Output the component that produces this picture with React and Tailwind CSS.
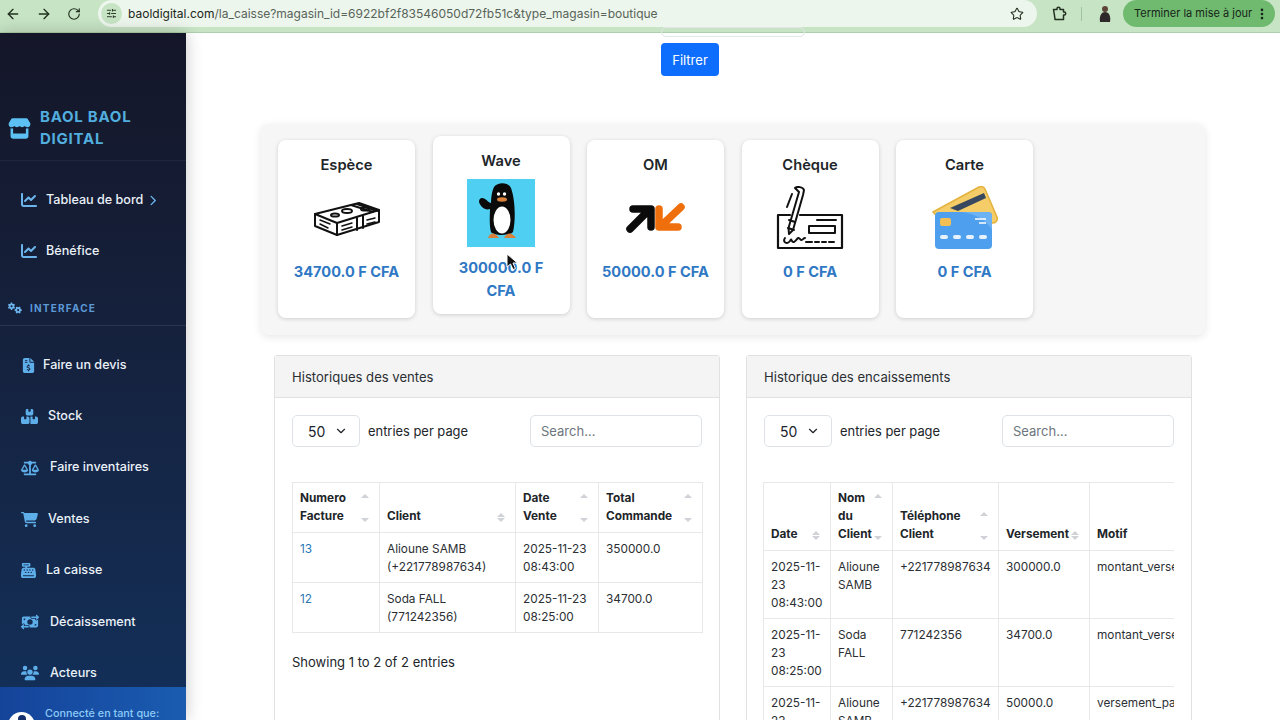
import React from "react";
import { ArrowLeft, ArrowRight, RotateCw, SlidersHorizontal, Star, MoreVertical, ChevronDown } from "lucide-react";
import { FaChartLine, FaChevronRight, FaGears, FaFileInvoiceDollar, FaBoxesStacked, FaScaleBalanced, FaCartShopping, FaCashRegister, FaMoneyBillTransfer, FaUsers, FaStore } from "react-icons/fa6";

const nav = [
  ["Faire un devis", FaFileInvoiceDollar, "w-[22px]", 15],
  ["Stock", FaBoxesStacked, "w-[27px]", 17],
  ["Faire inventaires", FaScaleBalanced, "w-[29px]", 18],
  ["Ventes", FaCartShopping, "w-[27px]", 17],
  ["La caisse", FaCashRegister, "w-[25px]", 15],
  ["Décaissement", FaMoneyBillTransfer, "w-[29px]", 18],
  ["Acteurs", FaUsers, "w-[29px]", 18],
];

function SortIcon({ mode = "sep" }) {
  const top = mode === "sep" ? "bottom-[15px]" : mode === "mid" ? "top-[29px]" : "top-[11px]";
  return <span className="absolute right-[10px] top-0 bottom-0 w-[8px]" aria-hidden>
    <span className={`absolute left-0 w-0 h-0 border-x-[4px] border-x-transparent border-b-[4px] border-b-[#cfd2d6] ${top}`} />
    <span className="absolute left-0 w-0 h-0 border-x-[4px] border-x-transparent border-t-[4px] border-t-[#cfd2d6] bottom-[10px]" />
  </span>;
}

function Th({ w, children, mode, className = "" }) {
  return <th className={`relative border border-[#e6e8ea] align-bottom text-left font-bold px-[7px] pb-[7px] pt-[6px] leading-[18px] ${className}`} style={{ width: w }}>
    {children}<SortIcon mode={mode} />
  </th>;
}
function Td({ children, className = "" }) {
  return <td className={`border border-[#e6e8ea] align-top px-[7px] pt-[7px] pb-[6px] leading-[18px] ${className}`}>{children}</td>;
}

function Banknotes() {
  return <svg width="68" height="36" viewBox="0 0 68 36" fill="none" stroke="#111" strokeWidth="2" strokeLinejoin="round" strokeLinecap="round">
    <path d="M2 14 L46 3 L66 10 L24 23 Z" fill="#fff" />
    <path d="M2 14 V26 L24 35 V23" />
    <path d="M24 35 L66 22 V10" />
    <path d="M38 5 L60 12 M44 4 L64 11 M50 16 V28 M44 18 V30" />
    <ellipse cx="34" cy="11" rx="5" ry="2" />
    <ellipse cx="22" cy="15" rx="4" ry="1.6" />
    <ellipse cx="52" cy="9" rx="4" ry="1.6" />
    <path d="M7 20 L17 24 M7 24 L15 28 M29 26 L39 23 M29 30 L39 27 M54 20 L62 18 M54 24 L62 22" strokeWidth="1.5" />
  </svg>;
}
function Penguin() {
  return <svg width="68" height="68" viewBox="0 0 68 68">
    <rect width="68" height="68" fill="#4fd0f2" />
    <path d="M27 8 C31 3 41 3 44 9 C48 20 49 40 46 53 C43 57 27 57 24 53 C22 46 23 34 23 30 C18 32 13 27 12 23 C12 19 15 18 18 20 C20 21 22 24 24 24 C24 18 25 12 27 8 Z" fill="#0a0a0a" />
    <ellipse cx="35" cy="41" rx="8.5" ry="13.5" fill="#fff" />
    <circle cx="31.5" cy="15" r="1.7" fill="#fff" /><circle cx="37.5" cy="15" r="1.7" fill="#fff" />
    <ellipse cx="35" cy="20.5" rx="5" ry="2.2" fill="#d9803a" />
    <path d="M21 59 C23 53 28 53 32 59 Z M37 59 C40 53 45 53 49 59 Z" fill="#d9803a" />
  </svg>;
}
function OMLogo() {
  return <svg width="60" height="30" viewBox="0 0 60 30" fill="none" strokeLinecap="round" strokeLinejoin="round">
    <path d="M4 26 L23 7 M7 6 H25 V24" stroke="#0b0b0b" strokeWidth="7.5" />
    <path d="M55 4 L36 22 M33 6 V24 H52" stroke="#ee6f0c" strokeWidth="7.5" />
  </svg>;
}
function Cheque() {
  return <svg width="68" height="64" viewBox="0 0 68 64" fill="none" stroke="#111" strokeWidth="2" strokeLinecap="round" strokeLinejoin="round">
    <path d="M14 29 H2 V62 H66 V29 H24" strokeWidth="2.2" />
    <path d="M19 2 C21 0 27 1 28 4 L27 9 L17 44 L13 48 L12.5 42 L23 6 Z" fill="#fff" />
    <path d="M16 8 L11 21 M12 42 L18 44 M19 36 L13 34" />
    <rect x="33" y="40" width="26" height="7" />
    <path d="M41 34 H60 M30 56 H36 M39 56 H43 M46 56 H50 M53 56 H58" />
    <path d="M9 52 C6 56 11 59 14 55 C16 51 15 57 18 56 C21 54 22 50 24 53 C26 56 27 52 29 52" strokeWidth="2"/>
  </svg>;
}
function Cards() {
  return <svg width="66" height="64" viewBox="0 0 66 64">
    <path d="M1 26 L47 1 C50 0 52 1 53 3 L65 31 C66 34 64 37 61 37 L12 38 Z" fill="#f4cd68" stroke="#e5b13d" strokeWidth="1.5" />
    <path d="M18 22 L52 7 L54 12 L26 25 Z" fill="#38495f" />
    <rect x="3" y="26" width="57" height="37" rx="4" fill="#4e9fee" />
    <path d="M30 26 H56 C59 26 60 28 60 30 V44 C54 34 44 28 30 26 Z" fill="#6db2f3" />
    <rect x="8" y="32" width="11" height="8" rx="2" fill="#f2bf55" />
    <path d="M43 33 H54 M47 37 H54" stroke="#fff" strokeWidth="1.3" />
    <rect x="8" y="49" width="8" height="4" rx="2" fill="#e6f2fd" /><rect x="21" y="49" width="8" height="4" rx="2" fill="#e6f2fd" /><rect x="34" y="49" width="8" height="4" rx="2" fill="#e6f2fd" /><rect x="47" y="49" width="8" height="4" rx="2" fill="#e6f2fd" />
  </svg>;
}

function Pay({ title, icon, value, wave }) {
  return <div className={`w-[137px] shrink-0 bg-white rounded-[8px] shadow-[0_1px_4px_rgba(0,0,0,0.16)] flex flex-col items-center text-center h-[178px] pt-[15px] ${wave ? "-mt-[4px]" : ""}`}>
    <div className="text-[14.7px] font-semibold text-[#212529] leading-[20px]">{title}</div>
    <div className={`${wave ? "mt-[8px]" : "mt-[9px]"} h-[68px] flex items-center justify-center`}>{icon}</div>
    <div className={`text-[14.6px] font-bold text-[#2f78c4] leading-[22.5px] ${wave ? "mt-[10px] px-[16px]" : "mt-[9px]"}`}>{value}</div>
  </div>;
}

function CardTop({ title }) {
  return <>
    <div className="h-[42px] bg-[#f4f4f4] border-b border-[#dfe1e3] px-[17px] pt-[2px] flex items-center text-[13.1px] text-[#2b2f33]">{title}</div>
    <div className="flex items-center mt-[17px] ml-[17px] w-[410px]">
      <div className="w-[68px] h-[32px] border border-[#dee2e6] rounded-[5px] bg-white flex items-center justify-between pl-[15px] pr-[11px] text-[14px] text-[#212529]">50 <ChevronDown size={14} strokeWidth={2} /></div>
      <span className="ml-[8px] mt-[2px] text-[12.9px] text-[#212529]">entries per page</span>
      <div className="ml-auto w-[172px] h-[32px] border border-[#dee2e6] rounded-[5px] bg-white flex items-center px-[10px] pt-[2px] text-[13px] text-[#6c757d]">Search...</div>
    </div>
  </>;
}

export default function App() {
  return <div className="w-[1280px] h-[720px] overflow-hidden bg-white flex flex-col font-['Inter','Liberation_Sans',sans-serif]">
    <div className="h-[33px] shrink-0 bg-[#c7e4c5] border-b border-[#aecfae] flex items-start text-[#22301f]">
      <div className="flex items-center h-[27px] pl-[5px]">
        <ArrowLeft size={16} strokeWidth={2} />
        <ArrowRight size={16} strokeWidth={2} className="ml-[15px]" />
        <RotateCw size={14} strokeWidth={2} className="ml-[15px]" />
      </div>
      <div className="ml-[17px] w-[939px] h-[27px] bg-[#edf6ec] rounded-full flex items-center pl-[3px] pr-[13px]">
        <span className="w-[21px] h-[21px] rounded-full bg-[#c7e4c5] flex items-center justify-center"><SlidersHorizontal size={11} /></span>
        <span className="ml-[6px] text-[12px] whitespace-nowrap"><span className="text-[#1c2520]">baoldigital.com</span><span className="text-[#58635a]">/la_caisse?magasin_id=6922bf2f83546050d72fb51c&amp;type_magasin=boutique</span></span>
        <Star size={14} strokeWidth={1.8} className="ml-auto" />
      </div>
      <div className="h-[27px] flex items-center">
        <svg width="15" height="15" viewBox="0 0 15 15" fill="none" stroke="#22301f" strokeWidth="1.5" strokeLinejoin="round" className="ml-[15px]"><path d="M1.5 3.5 H5 V2.5 C5 0.8 8 0.8 8 2.5 V3.5 H11.5 V6 H12.3 C14.2 6 14.2 9 12.3 9 H11.5 V13.5 H3 L2.5 9.5 L1.5 3.5 Z" /></svg>
        <span className="ml-[14px] w-px h-[14px] bg-[#9fc49f]" />
        <svg width="14" height="18" viewBox="0 0 14 18" className="ml-[16px]"><circle cx="7" cy="4" r="3" fill="#5e4438" /><path d="M2 17 C1 10 4 7 7 7 C11 7 13 11 12 17 Z" fill="#2f2a2a" /></svg>
      </div>
      <div className="ml-[11px] w-[152px] h-[27px] bg-[#6fba6e] rounded-full flex items-center pl-[11px] text-[11px] text-[#17241a] whitespace-nowrap">Terminer la mise à jour<MoreVertical size={14} strokeWidth={2.6} className="ml-[3px]" /></div>
    </div>

    <div className="flex flex-1 min-h-0">
      <aside className="w-[186px] shrink-0 bg-gradient-to-b from-[#141628] to-[#12305a] text-white relative flex flex-col shadow-[0_0_16px_rgba(0,0,0,0.22)] z-10">
        <div className="mt-[67px] h-[61px] pl-[8px] pb-[4px] flex items-center border-b border-[#20263c]">
          <FaStore size={23} className="text-[#5cc0f2]" />
          <div className="ml-[9px] text-[15px] font-bold text-[#52aedf] leading-[22.5px] tracking-[0.75px]">BAOL BAOL<br />DIGITAL</div>
        </div>
        <div className="mt-[27px] flex items-center h-[24px] pl-[21px]">
          <FaChartLine size={16} className="text-[#6cb4ec]" />
          <span className="ml-[9px] text-[12.6px] font-medium text-[#eaf1f8]">Tableau de bord</span>
          <FaChevronRight size={11} className="ml-[4px] text-[#6cb4ec]" />
        </div>
        <div className="mt-[27px] flex items-center h-[24px] pl-[21px]">
          <FaChartLine size={16} className="text-[#6cb4ec]" />
          <span className="ml-[9px] text-[12.6px] font-medium text-[#eaf1f8]">Bénéfice</span>
        </div>
        <div className="mt-[35px] h-[28px] border-b border-[#2a3650] flex items-start pl-[8px] pt-[3px]">
          <FaGears size={14} className="text-[#6cb4ec]" />
          <span className="ml-[8px] text-[10px] font-bold tracking-[1.2px] text-[#5b9ad6]">INTERFACE</span>
        </div>
        <div className="mt-[27px] flex flex-col gap-[27.4px]">
          {nav.map(([label, Icon, w, size]) => <div key={label} className="flex items-center h-[24px] pl-[21px]">
            <span className={`${w} shrink-0 flex items-center`}><Icon size={size} className="text-[#5eaeea]" /></span>
            <span className="text-[12.6px] font-medium text-[#eaf1f8]">{label}</span>
          </div>)}
        </div>
        <div className="absolute left-0 right-0 bottom-0 h-[33px] bg-gradient-to-r from-[#15439a] to-[#1a5cb0] flex items-start overflow-hidden">
          <span className="ml-[8px] mt-[25px] w-[27px] h-[27px] rounded-full bg-white flex justify-center pt-[3px] shrink-0"><span className="w-[8px] h-[8px] rounded-full bg-[#15306a]" /></span>
          <span className="ml-[10px] mt-[20px] text-[10.8px] leading-[14px] font-medium text-[#8ccaf6] whitespace-nowrap">Connecté en tant que:</span>
        </div>
      </aside>

      <main className="flex-1 min-w-0 relative">
        <div className="absolute left-[475px] -top-[6px] w-[144px] h-[10px] border border-[#e3e5e8] rounded-[5px]" />
        <div className="flex pt-[10px] pl-[475px]">
          <button className="w-[58px] h-[33px] pt-[2px] bg-[#0d6efd] rounded-[4px] text-white text-[13px]">Filtrer</button>
        </div>
        <div className="ml-[75px] mt-[48px] w-[944px] h-[211px] bg-[#f6f6f6] rounded-[8px] shadow-[0_2px_8px_rgba(0,0,0,0.10)] flex gap-[17.5px] pl-[17px] pt-[16px]">
          <Pay title="Espèce" icon={<Banknotes />} value="34700.0 F CFA" />
          <Pay title="Wave" icon={<Penguin />} value="300000.0 F CFA" wave />
          <Pay title="OM" icon={<OMLogo />} value="50000.0 F CFA" />
          <Pay title="Chèque" icon={<Cheque />} value="0 F CFA" />
          <Pay title="Carte" icon={<Cards />} value="0 F CFA" />
        </div>
        <div className="ml-[88px] mt-[20px] flex gap-[26px] items-start">
          <div className="w-[446px] h-[400px] shrink-0 border border-[#dfe1e3] rounded-[3px] bg-white">
            <CardTop title="Historiques des ventes" />
            <div className="mt-[35px] ml-[17px] w-[410px]">
              <table className="w-[410px] border-collapse table-fixed text-[11.8px] text-[#2b2f33]">
                <thead className="font-bold text-[#212529]"><tr className="h-[50px]">
                  <Th w={87} mode="wide">Numero<br />Facture</Th>
                  <Th w={136}>Client</Th>
                  <Th w={83} mode="wide">Date<br />Vente</Th>
                  <Th w={104} mode="wide">Total<br />Commande</Th>
                </tr></thead>
                <tbody>
                  <tr className="h-[50px]"><Td className="text-[#2a77b5]">13</Td><Td>Alioune SAMB<br />(+221778987634)</Td><Td>2025-11-23<br />08:43:00</Td><Td>350000.0</Td></tr>
                  <tr className="h-[50px]"><Td className="text-[#2a77b5]">12</Td><Td>Soda FALL<br />(771242356)</Td><Td>2025-11-23<br />08:25:00</Td><Td>34700.0</Td></tr>
                </tbody>
              </table>
              <div className="mt-[20px] text-[13px] text-[#212529]">Showing 1 to 2 of 2 entries</div>
            </div>
          </div>
          <div className="w-[446px] h-[400px] shrink-0 border border-[#dfe1e3] rounded-[3px] bg-white">
            <CardTop title="Historique des encaissements" />
            <div className="mt-[35px] ml-[16px] w-[411px] overflow-hidden">
              <table className="w-[501px] border-collapse table-fixed text-[11.8px] text-[#2b2f33]">
                <thead className="font-bold text-[#212529]"><tr className="h-[68px]">
                  <Th w={67}>Date</Th>
                  <Th w={62} mode="wide">Nom<br />du<br />Client</Th>
                  <Th w={106} mode="mid">Téléphone<br />Client</Th>
                  <Th w={91}>Versement</Th>
                  <th className="border border-[#e6e8ea] text-left align-bottom px-[7px] pb-[7px] leading-[18px]">Motif</th>
                </tr></thead>
                <tbody>
                  <tr className="h-[68px]"><Td>2025-11-<br />23<br />08:43:00</Td><Td>Alioune<br />SAMB</Td><Td>+221778987634</Td><Td>300000.0</Td><Td>montant_versement</Td></tr>
                  <tr className="h-[68px]"><Td>2025-11-<br />23<br />08:25:00</Td><Td>Soda<br />FALL</Td><Td>771242356</Td><Td>34700.0</Td><Td>montant_versement</Td></tr>
                  <tr className="h-[68px]"><Td>2025-11-<br />23<br />08:10:00</Td><Td>Alioune<br />SAMB</Td><Td>+221778987634</Td><Td>50000.0</Td><Td>versement_partiel</Td></tr>
                </tbody>
              </table>
            </div>
          </div>
        </div>
        <svg width="13" height="18" viewBox="0 0 13 18" className="absolute left-[320px] top-[220px]"><path d="M1 1 L1 14 L4.5 11 L7 16.5 L9.5 15.5 L7 10 L11.5 10 Z" fill="#111" stroke="#fff" strokeWidth="1" /></svg>
      </main>
    </div>
  </div>;
}
